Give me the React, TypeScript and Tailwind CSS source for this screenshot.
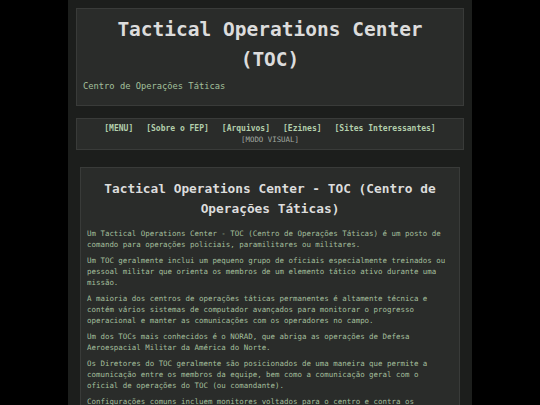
import React from "react";

const paras = [
  "Um Tactical Operations Center - TOC (Centro de Operações Táticas) é um posto de comando para operações policiais, paramilitares ou militares.",
  "Um TOC geralmente inclui um pequeno grupo de oficiais especialmente treinados ou pessoal militar que orienta os membros de um elemento tático ativo durante uma missão.",
  "A maioria dos centros de operações táticas permanentes é altamente técnica e contém vários sistemas de computador avançados para monitorar o progresso operacional e manter as comunicações com os operadores no campo.",
  "Um dos TOCs mais conhecidos é o NORAD, que abriga as operações de Defesa Aeroespacial Militar da América do Norte.",
  "Os Diretores do TOC geralmente são posicionados de uma maneira que permite a comunicação entre os membros da equipe, bem como a comunicação geral com o oficial de operações do TOC (ou comandante).",
  "Configurações comuns incluem monitores voltados para o centro e contra os operadores, permitindo que todos vejam as informações exibidas ao mesmo tempo.",
];

const nav = ["[MENU]", "[Sobre o FEP]", "[Arquivos]", "[Ezines]", "[Sites Interessantes]"];

export default function App() {
  return (
    <div className="min-h-[405px] h-[405px] overflow-hidden bg-black font-['DejaVu_Sans_Mono',monospace]">
      <div className="mx-auto w-[404px] min-h-[405px] bg-[#1c1e1c] pt-[8px]">
        <div className="mx-[8px] border border-[#393b39] bg-[#2a2c2a] px-[6px] pt-[6px] pb-[13px]">
          <h1 className="m-0 px-[4px] text-center text-[19.5px] font-bold leading-[30px] text-[#dcdcdc]">
            Tactical Operations Center (TOC)
          </h1>
          <p className="mt-[5px] text-[8.75px] leading-[12px] text-[#a3c09c]">Centro de Operações Táticas</p>
        </div>
        <div className="mx-[8px] mt-[12px] border border-[#393b39] bg-[#2a2c2a] pt-[5px] pb-[4px]">
          <div className="flex justify-center gap-[13px] text-[8px] font-bold leading-[10px] text-[#b3cfac]">
            {nav.map((n) => (
              <span key={n}>{n}</span>
            ))}
          </div>
          <div className="mt-[1px] text-center text-[7.4px] leading-[10px] text-[#a0a8a0]">[MODO VISUAL]</div>
        </div>
        <div className="mx-[12px] mt-[17px] border border-[#393b39] bg-[#2a2c2a] px-[6px] pt-[11px] pb-[10px]">
          <h2 className="m-0 text-center text-[12.8px] font-bold leading-[20px] text-[#dcdcdc]">
            Tactical Operations Center - TOC (Centro de Operações Táticas)
          </h2>
          <div className="mt-[9px] flex flex-col gap-[5px]">
            {paras.map((p, i) => (
              <p key={i} className="m-0 text-[7.45px] leading-[11px] text-[#a3bf9c]">
                {p}
              </p>
            ))}
          </div>
        </div>
      </div>
    </div>
  );
}
